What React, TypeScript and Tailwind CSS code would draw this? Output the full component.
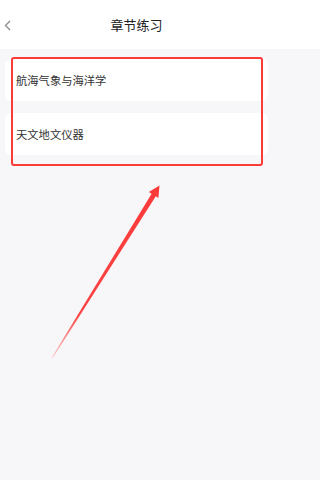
const chapters = ["航海气象与海洋学", "天文地文仪器"];

const font = { fontFamily: '"Noto Sans CJK SC", "Noto Sans", sans-serif' };

export default function App() {
  return (
    <div className="relative w-full h-[480px] bg-[#f7f7fa] overflow-hidden" style={font}>
      <header className="h-[49px] bg-white flex items-center relative">
        <svg className="absolute left-[4px] top-[20px]" width="8" height="11" viewBox="0 0 8 11">
          <polyline points="6,1 1.5,5.5 6,10" fill="none" stroke="#8a8a8a" strokeWidth="1.3" />
        </svg>
        <h1 className="w-[273px] text-center text-[13px] text-[#222] leading-none">章节练习</h1>
      </header>

      <div className="flex flex-col gap-[12px] pl-[5px] w-[273px] pr-[5px] pt-[10px]">
        {chapters.map((c) => (
          <div key={c} className="h-[42px] bg-white rounded-[6px] flex items-center pl-[11px] text-[11.3px] text-[#333]">
            {c}
          </div>
        ))}
      </div>

      {/* annotation overlay */}
      <div className="absolute left-[11px] top-[57px] w-[252px] h-[109px] border-2 border-[#fb3a3a] rounded-[3px]" />
      <svg className="absolute left-0 top-0" width="273" height="480" viewBox="0 0 273 480">
        <defs>
          <linearGradient id="fade" x1="52" y1="358" x2="159" y2="186" gradientUnits="userSpaceOnUse">
            <stop offset="0" stopColor="#fb3a3a" stopOpacity="0.2" />
            <stop offset="0.25" stopColor="#fb3a3a" stopOpacity="0.95" />
            <stop offset="1" stopColor="#fb3a3a" />
          </linearGradient>
        </defs>
        <polygon
          points="159.5,185.5 158.4,198 155.8,196.3 52.6,358.2 51.7,357.6 151.6,193.7 148.8,192"
          fill="url(#fade)"
        />
      </svg>
    </div>
  );
}
